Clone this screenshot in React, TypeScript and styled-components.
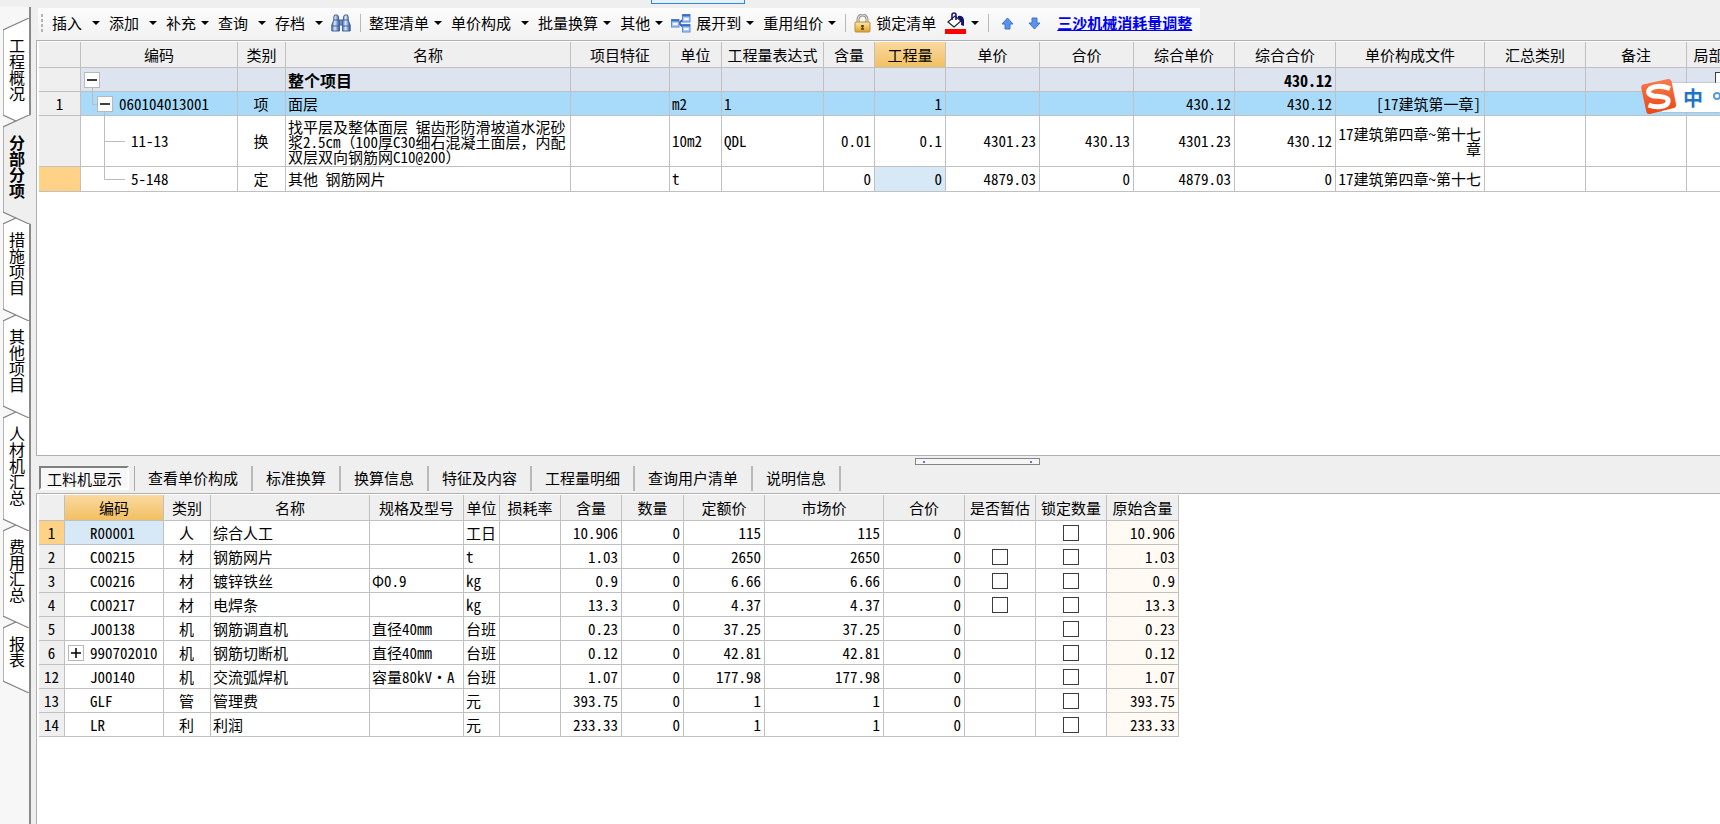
import React from 'react';
import styled, { createGlobalStyle, css } from 'styled-components';

const line = '#c0c0c0';
const panel = '#efefef';

const GlobalStyle = createGlobalStyle`
  * { box-sizing: border-box; }
  body { margin: 0; background: ${panel}; }
  body, button, input, table {
    font-family: 'Noto Sans Mono CJK SC', 'Noto Sans CJK SC', 'Liberation Mono', monospace;
    font-size: 15px;
    line-height: 20px;
    color: #000;
  }
  button { border: 0; padding: 0; background: none; white-space: nowrap; cursor: pointer; }
`;

const Page = styled.div`
  display: flex;
  flex-direction: column;
  min-height: 100vh;
  overflow: hidden;
`;

const TopStrip = styled.header`
  display: flex;
  flex: 0 0 7px;
  height: 7px;
  padding-left: 651px;
`;

const StripSelection = styled.div`
  width: 94px;
  height: 4px;
  border: 1px solid #2f8ad6;
  border-top: 0;
  background: #e4f0fa;
`;

const Body = styled.div`
  display: flex;
  flex: 1;
`;

/* ---------- side tabs ---------- */

const SideBar = styled.nav`
  display: flex;
  flex-direction: column;
  flex: 0 0 31px;
  padding: 11px 0 0 3px;
  background: #f7f7f7;
  border-right: 2px solid #8a8a8a;
`;

const SideTab = styled.button<{ $level: number; $active?: boolean }>`
  position: relative;
  display: flex;
  z-index: ${(p) => p.$level};
  width: 26px;
  margin-bottom: -12px;
  padding: 20px 0 25px 3px;
  font-size: 16px;
  line-height: 22px;
  font-weight: ${(p) => (p.$active ? 700 : 400)};
`;

const SideLabel = styled.span`
  position: relative;
  writing-mode: vertical-rl;
`;

const SideShape = styled.svg`
  position: absolute;
  top: 0;
  left: 0;
  width: 28px;
  height: 100%;
`;

/* ---------- toolbar ---------- */

const Main = styled.main`
  display: flex;
  flex: 1;
  flex-direction: column;
  min-width: 0;
  padding-left: 5px;
`;

const ToolBar = styled.div`
  display: flex;
  align-items: center;
  align-self: flex-start;
  height: 32px;
  margin: 1px 0 0 2px;
  padding: 0 8px 2px 3px;
  background: linear-gradient(#fcfcfc, #f1f1f1);
`;

const Grip = styled.span`
  width: 2px;
  height: 19px;
  margin-right: 9px;
  background: repeating-linear-gradient(#b4b4b4 0 3px, transparent 3px 5px);
`;

const ToolButton = styled.button<{ $after: number }>`
  display: flex;
  align-items: center;
  gap: 5px;
  height: 28px;
  margin-right: ${(p) => p.$after}px;
`;

const Caret = styled.span<{ $split?: boolean }>`
  margin-left: ${(p) => (p.$split ? 5 : 0)}px;
  border: 4px solid transparent;
  border-top-color: #000;
  border-bottom: 0;
`;

const Divider = styled.span<{ $after?: number }>`
  width: 1px;
  height: 18px;
  margin-right: ${(p) => p.$after || 8}px;
  background: #b9b9b9;
`;

const ToolLink = styled.a`
  color: #0000f0;
  font-weight: 700;
`;

/* ---------- grids ---------- */

const GridBox = styled.section<{ $share: number; $open?: boolean }>`
  flex: ${(p) => p.$share} 1 0;
  min-height: 0;
  overflow: hidden;
  padding: 1px 0 0 2px;
  border: 1px solid #b0b0b8;
  border-right: 0;
  ${(p) => p.$open && 'border-bottom: 0;'}
  background: #fff;
`;

const Grid = styled.table`
  table-layout: fixed;
  width: 0;
  border-collapse: separate;
  border-spacing: 0;
`;

type Align = 'left' | 'center' | 'right';

const cellBase = css`
  overflow: hidden;
  padding: 0 3px 0 2px;
  border-right: 1px solid ${line};
  border-bottom: 1px solid ${line};
  white-space: nowrap;
`;

const Head = styled.th<{ $hot?: boolean }>`
  ${cellBase}
  height: 26px;
  padding: 0;
  text-align: center;
  font-weight: 400;
  background: ${(p) => (p.$hot ? 'linear-gradient(#fad9a0, #f1c062)' : panel)};
`;

const Row = styled.tr<{ $height: number; $fill?: string }>`
  height: ${(p) => p.$height}px;
  background: ${(p) => p.$fill || '#fff'};
`;

const Index = styled.th<{ $hot?: boolean }>`
  ${cellBase}
  padding: 0;
  font-weight: 400;
  text-align: center;
  background: ${(p) => (p.$hot ? '#ffd288' : panel)};
`;

const Cell = styled.td<{ $align?: Align; $fill?: string; $strong?: boolean }>`
  ${cellBase}
  text-align: ${(p) => p.$align || 'left'};
  ${(p) => p.$fill && `background: ${p.$fill};`}
  ${(p) => p.$strong && 'font-weight: 700; font-size: 16px;'}
`;

const WrapText = styled.span`
  display: block;
  line-height: 15px;
  white-space: normal;
`;

const TreeCell = styled(Cell)`
  position: relative;
  padding: 0;
`;

const TreeItem = styled.div<{ $indent: number }>`
  position: relative;
  display: flex;
  align-items: center;
  gap: 6px;
  padding-left: ${(p) => p.$indent}px;
`;

const TreeLines = styled.svg`
  position: absolute;
  top: 0;
  left: 0;
  width: 60px;
  height: 100%;
  fill: none;
  stroke: #bdbdbd;
`;

const Toggle = styled.button`
  display: grid;
  place-items: center;
  width: 16px;
  height: 16px;
  border: 1px solid #b8b8b8;
  background: #fff;
`;

const Check = styled.input`
  display: block;
  width: 16px;
  height: 16px;
  margin: 0 auto;
  appearance: none;
  border: 1px solid #3c3c3c;
  background: #fff;
`;

/* ---------- splitter and detail tabs ---------- */

const Splitter = styled.div`
  display: flex;
  justify-content: center;
  height: 10px;
  padding: 2px 0 1px 198px;
`;

const SplitterHandle = styled.button`
  display: flex;
  justify-content: space-between;
  align-items: center;
  width: 125px;
  height: 7px;
  padding: 0 7px;
  border: 1px solid #858585;
  background: #f6f6f6;
  cursor: row-resize;

  &::before, &::after {
    content: '';
    width: 2px;
    height: 2px;
    background: #7070d0;
  }
`;

const DetailTabs = styled.div`
  display: flex;
  height: 27px;
  padding-left: 3px;
`;

const DetailTab = styled.button<{ $active?: boolean }>`
  height: 24px;
  margin: 0 ${(p) => (p.$active ? 4 : 0)}px 0 0;
  padding: ${(p) => (p.$active ? '1px 5px 0 6px' : '0 13px')};
  ${(p) =>
    p.$active &&
    `border: 2px solid #fff;
     border-top-color: #808080;
     border-left-color: #808080;
     background: #f7f7f7;`}
`;

const DetailTabSlot = styled.span`
  display: flex;
  height: 25px;
  padding-right: 1px;
  border-right: 1px solid #a8a8a8;

  & + & { padding-right: 0; border-right-width: 2px; border-right-color: #b8b8b8; }
`;

/* ---------- input method badge ---------- */

const ImeBar = styled.aside`
  position: absolute;
  top: 83px;
  right: 0;
  display: flex;
  align-items: center;
  width: 58px;
  height: 29px;
  padding-left: 21px;
  background: #fff;
  box-shadow: 0 0 2px #9aa4b0;
  color: #1f74c8;
  font-size: 20px;
  line-height: 29px;
  font-weight: 700;
  white-space: nowrap;
`;

const ImeLogo = styled.svg`
  position: absolute;
  left: -22px;
  top: -5px;
  width: 37px;
  height: 37px;
`;

const ImeText = styled.span`
  display: flex;
  align-items: center;
  gap: 10px;
  width: 37px;
  overflow: hidden;
`;

const Dot = styled.span`
  flex: 0 0 8px;
  height: 8px;
  margin-bottom: 4px;
  border: 2px solid #5a9ad8;
  border-radius: 50%;
`;

/* ---------- icons ---------- */

const Binoculars = () => (
  <svg width="20" height="18" viewBox="0 0 20 18" aria-hidden="true">
    <defs>
      <linearGradient id="bino" x1="0" x2="1">
        <stop offset="0" stopColor="#4a70b4" />
        <stop offset=".4" stopColor="#dce9fa" />
        <stop offset="1" stopColor="#2c4c8c" />
      </linearGradient>
    </defs>
    <g stroke="#4263a0" strokeWidth="1">
      <path d="M8 6h4v5H8z" fill="#6f8fc4" />
      <path d="M3.500 1h3l1 2v3h1v11H.8V11l2-5V3z" fill="url(#bino)" />
      <path d="M13.500 1h3l.7 2v3l2 5v6h-7.700V6h1V3z" fill="url(#bino)" />
      <path d="M1 12h7.500M11.500 12H19M2.800 6h5M12.300 6h5" fill="none" />
    </g>
  </svg>
);

const ExpandIcon = () => (
  <svg width="20" height="19" viewBox="0 0 20 19" aria-hidden="true">
    <path d="M8 9l6-5M8 9l6 6" stroke="#3f5f9c" strokeWidth="2" fill="none" />
    {[[0.5, 5.5], [11.5, 0.5], [11.5, 10.5]].map(([x, y]) => (
      <g key={`${x}-${y}`}>
        <rect x={x} y={y} width="7.5" height="7.5" fill="#a9ccf7" stroke="#5b8ad6" />
        <path d={`M${x} ${y + 1}h7.500`} stroke="#3a6ac8" strokeWidth="2" />
        <path d={`M${x + 1.5} ${y + 4.5}h4.500`} stroke="#f4f9ff" strokeWidth="2" />
      </g>
    ))}
  </svg>
);

const LockIcon = () => (
  <svg width="17" height="19" viewBox="0 0 17 19" aria-hidden="true">
    <defs>
      <linearGradient id="lock" x2="0" y2="1">
        <stop offset="0" stopColor="#fbe9ad" />
        <stop offset="1" stopColor="#dda02c" />
      </linearGradient>
    </defs>
    <path d="M4 9V5.500a4.500 4.500 0 0 1 9 0V9" fill="none" stroke="#8f8b80" strokeWidth="3" />
    <path d="M4 9V5.500a4.500 4.500 0 0 1 9 0V9" fill="none" stroke="#e6e2d6" strokeWidth="1.200" />
    <rect x="1" y="8" width="15" height="10" rx="1" fill="url(#lock)" stroke="#c08d33" />
    <path d="M8.500 11v4M7 12h3M7 15h3" stroke="#5b4312" strokeWidth="1.400" />
  </svg>
);

const FillIcon = () => (
  <svg width="21" height="22" viewBox="0 0 21 22" aria-hidden="true">
    <path d="M3 10l7-6 6 5-7 6z" fill="#fff" stroke="#222" strokeWidth="1.200" />
    <path d="M7 8V3q0-2 2-2t2 2v5" fill="none" stroke="#1a1a80" strokeWidth="1.600" />
    <path d="M13 4q5-1 6 4v6l-3-1q1-5-3-7z" fill="#101078" />
    <path d="M0 17h21v5H0z" fill="#f00" />
  </svg>
);

const ArrowIcon = ({ down }: { down?: boolean }) => (
  <svg width="13" height="13" viewBox="0 0 13 13" aria-hidden="true">
    <path
      d={down ? 'M4 1h5v5h3l-5.500 6L1 6h3z' : 'M4 12h5V7h3L6.500 1 1 7h3z'}
      fill="#5b92ec"
      stroke="#3f72d0"
    />
  </svg>
);

const SogouLogo = () => (
  <ImeLogo viewBox="0 0 37 37" aria-hidden="true">
    <defs>
      <linearGradient id="sogou" x2="0" y2="1">
        <stop offset="0" stopColor="#f77a4c" />
        <stop offset="1" stopColor="#ee4410" />
      </linearGradient>
    </defs>
    <path d="M3 6.500L28 1q3-.5 3.600 2.500L36 26q.5 3-2 4L10 36q-3 .5-3.600-2L1.200 10Q1 7 3 6.500z" fill="url(#sogou)" />
    <path
      d="M30 10.500Q18 6 10.500 10.500q-5 5 3 7.500 13 .5 14.500 3.500 1 6-7 7-6 1-12.500-1.500"
      fill="none"
      stroke="#fff"
      strokeWidth="5"
    />
  </ImeLogo>
);

/* ---------- data ---------- */

const sideTabs = ['工程概况', '分部分项', '措施项目', '其他项目', '人材机汇总', '费用汇总', '报表'];

const detailTabs = ['查看单价构成', '标准换算', '换算信息', '特征及内容', '工程量明细', '查询用户清单', '说明信息'];

const billColumns: [string, number][] = [
  ['', 42], ['编码', 157], ['类别', 48], ['名称', 285], ['项目特征', 99], ['单位', 52],
  ['工程量表达式', 102], ['含量', 51], ['工程量', 71], ['单价', 94], ['合价', 94],
  ['综合单价', 101], ['综合合价', 101], ['单价构成文件', 149], ['汇总类别', 101],
  ['备注', 101], ['局部汇总', 74],
];

const resourceColumns: [string, number][] = [
  ['', 26], ['编码', 99], ['类别', 47], ['名称', 159], ['规格及型号', 94], ['单位', 36],
  ['损耗率', 61], ['含量', 61], ['数量', 62], ['定额价', 81], ['市场价', 119], ['合价', 81],
  ['是否暂估', 71], ['锁定数量', 71], ['原始含量', 72],
];

interface Resource {
  no: number; code: string; kind: string; name: string; spec?: string; unit: string;
  amount: string; price: string; estimate?: boolean; group?: boolean;
}

const resources: Resource[] = [
  { no: 1, code: 'R00001', kind: '人', name: '综合人工', unit: '工日', amount: '10.906', price: '115' },
  { no: 2, code: 'C00215', kind: '材', name: '钢筋网片', unit: 't', amount: '1.03', price: '2650', estimate: true },
  { no: 3, code: 'C00216', kind: '材', name: '镀锌铁丝', spec: 'Φ0.9', unit: 'kg', amount: '0.9', price: '6.66', estimate: true },
  { no: 4, code: 'C00217', kind: '材', name: '电焊条', unit: 'kg', amount: '13.3', price: '4.37', estimate: true },
  { no: 5, code: 'J00138', kind: '机', name: '钢筋调直机', spec: '直径40mm', unit: '台班', amount: '0.23', price: '37.25' },
  { no: 6, code: '990702010', kind: '机', name: '钢筋切断机', spec: '直径40mm', unit: '台班', amount: '0.12', price: '42.81', group: true },
  { no: 12, code: 'J00140', kind: '机', name: '交流弧焊机', spec: '容量80kV·A', unit: '台班', amount: '1.07', price: '177.98' },
  { no: 13, code: 'GLF', kind: '管', name: '管理费', unit: '元', amount: '393.75', price: '1' },
  { no: 14, code: 'LR', kind: '利', name: '利润', unit: '元', amount: '233.33', price: '1' },
];

/* ---------- parts ---------- */

const Sign = ({ plus }: { plus?: boolean }) => (
  <svg width="10" height="10" viewBox="0 0 10 10" aria-hidden="true">
    <path d={plus ? 'M0 5h10M5 0v10' : 'M0 5h10'} stroke="#000" strokeWidth="1.500" />
  </svg>
);

const SideTabs = () => (
  <SideBar>
    {sideTabs.map((label, i) => {
      const active = i === 1;
      const h = 45 + label.length * 16;
      const outline = `M26 0L0 12V${h - 12}L26 ${h}`;
      return (
        <SideTab key={label} $level={active ? 20 : 10 - i} $active={active}>
          <SideShape viewBox={`0 0 28 ${h}`} aria-hidden="true">
            <path d={active ? `M28 0L0 12V${h - 12}L28 ${h}z` : `${outline}z`} fill={active ? panel : '#fff'} />
            <path d={outline} fill="none" stroke="#848484" strokeWidth="1.200" />
          </SideShape>
          <SideLabel>{label}</SideLabel>
        </SideTab>
      );
    })}
  </SideBar>
);

const Menu = ({ label, split, after = 9, icon }: { label?: string; split?: boolean; after?: number; icon?: React.ReactNode }) => (
  <ToolButton $after={after} aria-label={label ? undefined : '填充颜色'}>
    {icon}
    {label}
    <Caret $split={split} />
  </ToolButton>
);

const Header = ({ columns, hot }: { columns: [string, number][]; hot: string }) => (
  <>
    <colgroup>
      {columns.map(([name, width]) => <col key={name} width={width} />)}
    </colgroup>
    <thead>
      <tr>
        {columns.map(([name]) => <Head key={name} scope="col" $hot={name === hot}>{name}</Head>)}
      </tr>
    </thead>
  </>
);

const Blank = ({ count }: { count: number }) => (
  <>{Array.from({ length: count }, (_, i) => <Cell key={i} />)}</>
);

const BillGrid = () => (
  <Grid>
    <Header columns={billColumns} hot="工程量" />
    <tbody>
      <Row $height={24} $fill="#dde4ef">
        <Index />
        <TreeCell>
          <TreeLines><path d="M11.500 12v12" /></TreeLines>
          <TreeItem $indent={3}><Toggle aria-label="折叠整个项目"><Sign /></Toggle></TreeItem>
        </TreeCell>
        <Cell />
        <Cell $strong>整个项目</Cell>
        <Blank count={8} />
        <Cell $strong $align="right">430.12</Cell>
        <Blank count={3} />
        <Cell><Check type="checkbox" aria-label="整个项目 局部汇总" /></Cell>
      </Row>
      <Row $height={24} $fill="#a8dbfa">
        <Index>1</Index>
        <TreeCell>
          <TreeLines><path d="M11.500 0v12.500H20M23.500 12v12" /></TreeLines>
          <TreeItem $indent={16}><Toggle aria-label="折叠面层"><Sign /></Toggle>060104013001</TreeItem>
        </TreeCell>
        <Cell $align="center">项</Cell>
        <Cell>面层</Cell>
        <Cell />
        <Cell>m2</Cell>
        <Cell>1</Cell>
        <Cell />
        <Cell $align="right">1</Cell>
        <Blank count={2} />
        <Cell $align="right">430.12</Cell>
        <Cell $align="right">430.12</Cell>
        <Cell $align="right">[17建筑第一章]</Cell>
        <Blank count={2} />
        <Cell><Check type="checkbox" aria-label="面层 局部汇总" /></Cell>
      </Row>
      <Row $height={51}>
        <Index />
        <TreeCell>
          <TreeLines><path d="M23.500 0v51M23.500 25.500H44" /></TreeLines>
          <TreeItem $indent={50}>11-13</TreeItem>
        </TreeCell>
        <Cell $align="center">换</Cell>
        <Cell>
          <WrapText>找平层及整体面层 锯齿形防滑坡道水泥砂浆2.5cm（100厚C30细石混凝土面层，内配双层双向钢筋网C10@200）</WrapText>
        </Cell>
        <Cell />
        <Cell>10m2</Cell>
        <Cell>QDL</Cell>
        <Cell $align="right">0.01</Cell>
        <Cell $align="right">0.1</Cell>
        <Cell $align="right">4301.23</Cell>
        <Cell $align="right">430.13</Cell>
        <Cell $align="right">4301.23</Cell>
        <Cell $align="right">430.12</Cell>
        <Cell $align="right"><WrapText>17建筑第四章~第十七章</WrapText></Cell>
        <Blank count={3} />
      </Row>
      <Row $height={25}>
        <Index $hot />
        <TreeCell>
          <TreeLines><path d="M23.500 0v12.500H44" /></TreeLines>
          <TreeItem $indent={50}>5-148</TreeItem>
        </TreeCell>
        <Cell $align="center">定</Cell>
        <Cell>其他 钢筋网片</Cell>
        <Cell />
        <Cell>t</Cell>
        <Cell />
        <Cell $align="right">0</Cell>
        <Cell $align="right" $fill="#d7e8f7">0</Cell>
        <Cell $align="right">4879.03</Cell>
        <Cell $align="right">0</Cell>
        <Cell $align="right">4879.03</Cell>
        <Cell $align="right">0</Cell>
        <Cell $align="right">17建筑第四章~第十七</Cell>
        <Blank count={3} />
      </Row>
    </tbody>
  </Grid>
);

const ResourceGrid = () => (
  <Grid>
    <Header columns={resourceColumns} hot="编码" />
    <tbody>
      {resources.map((r) => (
        <Row key={r.no} $height={24}>
          <Index $hot={r.no === 1}>{r.no}</Index>
          <TreeCell $fill={r.no === 1 ? '#d7e8f7' : undefined}>
            <TreeItem $indent={r.group ? 3 : 25}>
              {r.group && <Toggle aria-label={`展开${r.name}`}><Sign plus /></Toggle>}
              {r.code}
            </TreeItem>
          </TreeCell>
          <Cell $align="center">{r.kind}</Cell>
          <Cell>{r.name}</Cell>
          <Cell>{r.spec}</Cell>
          <Cell>{r.unit}</Cell>
          <Cell />
          <Cell $align="right">{r.amount}</Cell>
          <Cell $align="right">0</Cell>
          <Cell $align="right">{r.price}</Cell>
          <Cell $align="right">{r.price}</Cell>
          <Cell $align="right">0</Cell>
          <Cell>{r.estimate && <Check type="checkbox" aria-label={`${r.name} 是否暂估`} />}</Cell>
          <Cell><Check type="checkbox" aria-label={`${r.name} 锁定数量`} /></Cell>
          <Cell $align="right" $fill="#fffaf4">{r.amount}</Cell>
        </Row>
      ))}
    </tbody>
  </Grid>
);

export default function App() {
  return (
    <>
      <GlobalStyle />
      <Page>
        <TopStrip><StripSelection /></TopStrip>
        <Body>
          <SideTabs />
          <Main>
            <ToolBar>
              <Grip />
              <Menu label="插入" split />
              <Menu label="添加" split />
              <Menu label="补充" />
              <Menu label="查询" split />
              <Menu label="存档" split after={8} />
              <ToolButton $after={9} aria-label="查找"><Binoculars /></ToolButton>
              <Divider />
              <Menu label="整理清单" />
              <Menu label="单价构成" split />
              <Menu label="批量换算" />
              <Menu label="其他" after={8} />
              <Menu label="展开到" icon={<ExpandIcon />} />
              <Menu label="重用组价" />
              <Divider />
              <ToolButton $after={9}><LockIcon />锁定清单</ToolButton>
              <Menu icon={<FillIcon />} />
              <Divider $after={12} />
              <ToolButton $after={14} aria-label="上移"><ArrowIcon /></ToolButton>
              <ToolButton $after={16} aria-label="下移"><ArrowIcon down /></ToolButton>
              <ToolLink href="#adjust">三沙机械消耗量调整</ToolLink>
            </ToolBar>
            <GridBox $share={416}><BillGrid /></GridBox>
            <Splitter><SplitterHandle aria-label="调整面板高度" /></Splitter>
            <DetailTabs>
              <DetailTabSlot><DetailTab $active>工料机显示</DetailTab></DetailTabSlot>
              {detailTabs.map((label) => (
                <DetailTabSlot key={label}><DetailTab>{label}</DetailTab></DetailTabSlot>
              ))}
            </DetailTabs>
            <GridBox $share={331} $open><ResourceGrid /></GridBox>
          </Main>
        </Body>
        <ImeBar>
          <SogouLogo />
          <ImeText>中<Dot /></ImeText>
        </ImeBar>
      </Page>
    </>
  );
}
